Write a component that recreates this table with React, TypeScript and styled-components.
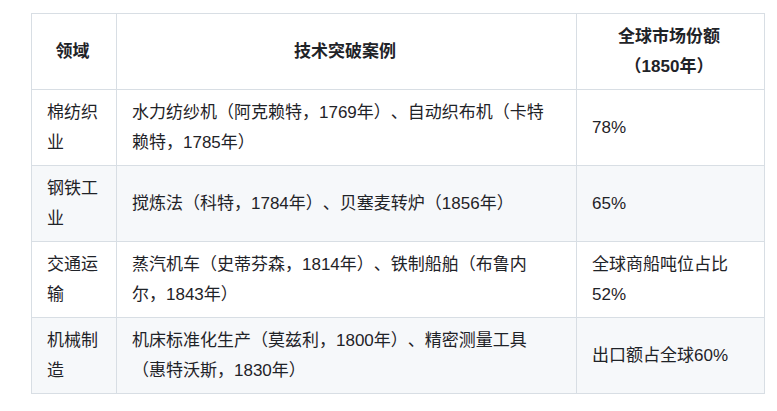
import * as React from 'react';
import styled, { createGlobalStyle } from 'styled-components';

interface IRow {
  field: string;
  cases: string;
  share: string;
}

const ROWS: IRow[] = [
  {
    field: '棉纺织业',
    cases: '水力纺纱机（阿克赖特，1769年）、自动织布机（卡特赖特，1785年）',
    share: '78%',
  },
  {
    field: '钢铁工业',
    cases: '搅炼法（科特，1784年）、贝塞麦转炉（1856年）',
    share: '65%',
  },
  {
    field: '交通运输',
    cases: '蒸汽机车（史蒂芬森，1814年）、铁制船舶（布鲁内尔，1843年）',
    share: '全球商船吨位占比52%',
  },
  {
    field: '机械制造',
    cases: '机床标准化生产（莫兹利，1800年）、精密测量工具（惠特沃斯，1830年）',
    share: '出口额占全球60%',
  },
];

const GlobalStyle = createGlobalStyle`
  html, body {
    margin: 0;
    padding: 0;
    background: #ffffff;
  }
  body {
    font-family: "Liberation Sans", "Noto Sans CJK SC", sans-serif;
    color: #1f2328;
  }
`;

const Page = styled.div`
  padding: 13px 13px 0 31px;
`;

const Table = styled.table`
  width: 733px;
  border-collapse: collapse;
  table-layout: fixed;
  font-size: 17px;
  line-height: 30px;
  text-spacing-trim: space-all;
`;

const HeadCell = styled.th`
  border: 1px solid #d8dee4;
  padding: 8px 18px 7px 15px;
  font-weight: 700;
  text-align: center;
  vertical-align: middle;
`;

const Row = styled.tr<{ $striped: boolean }>`
  background: ${p => (p.$striped ? '#f6f8fa' : '#ffffff')};
`;

const Cell = styled.td`
  border: 1px solid #d8dee4;
  padding: 8px 18px 7px 15px;
  vertical-align: middle;
`;

export default function App() {
  return (
    <>
      <GlobalStyle />
      <Page>
        <Table>
          <colgroup>
            <col style={{ width: '85px' }} />
            <col style={{ width: '460px' }} />
            <col style={{ width: '188px' }} />
          </colgroup>
          <thead>
            <tr>
              <HeadCell>领域</HeadCell>
              <HeadCell>技术突破案例</HeadCell>
              <HeadCell>全球市场份额（1850年）</HeadCell>
            </tr>
          </thead>
          <tbody>
            {ROWS.map((row, i) => (
              <Row key={row.field} $striped={i % 2 === 1}>
                <Cell>{row.field}</Cell>
                <Cell>{row.cases}</Cell>
                <Cell>{row.share}</Cell>
              </Row>
            ))}
          </tbody>
        </Table>
      </Page>
    </>
  );
}
